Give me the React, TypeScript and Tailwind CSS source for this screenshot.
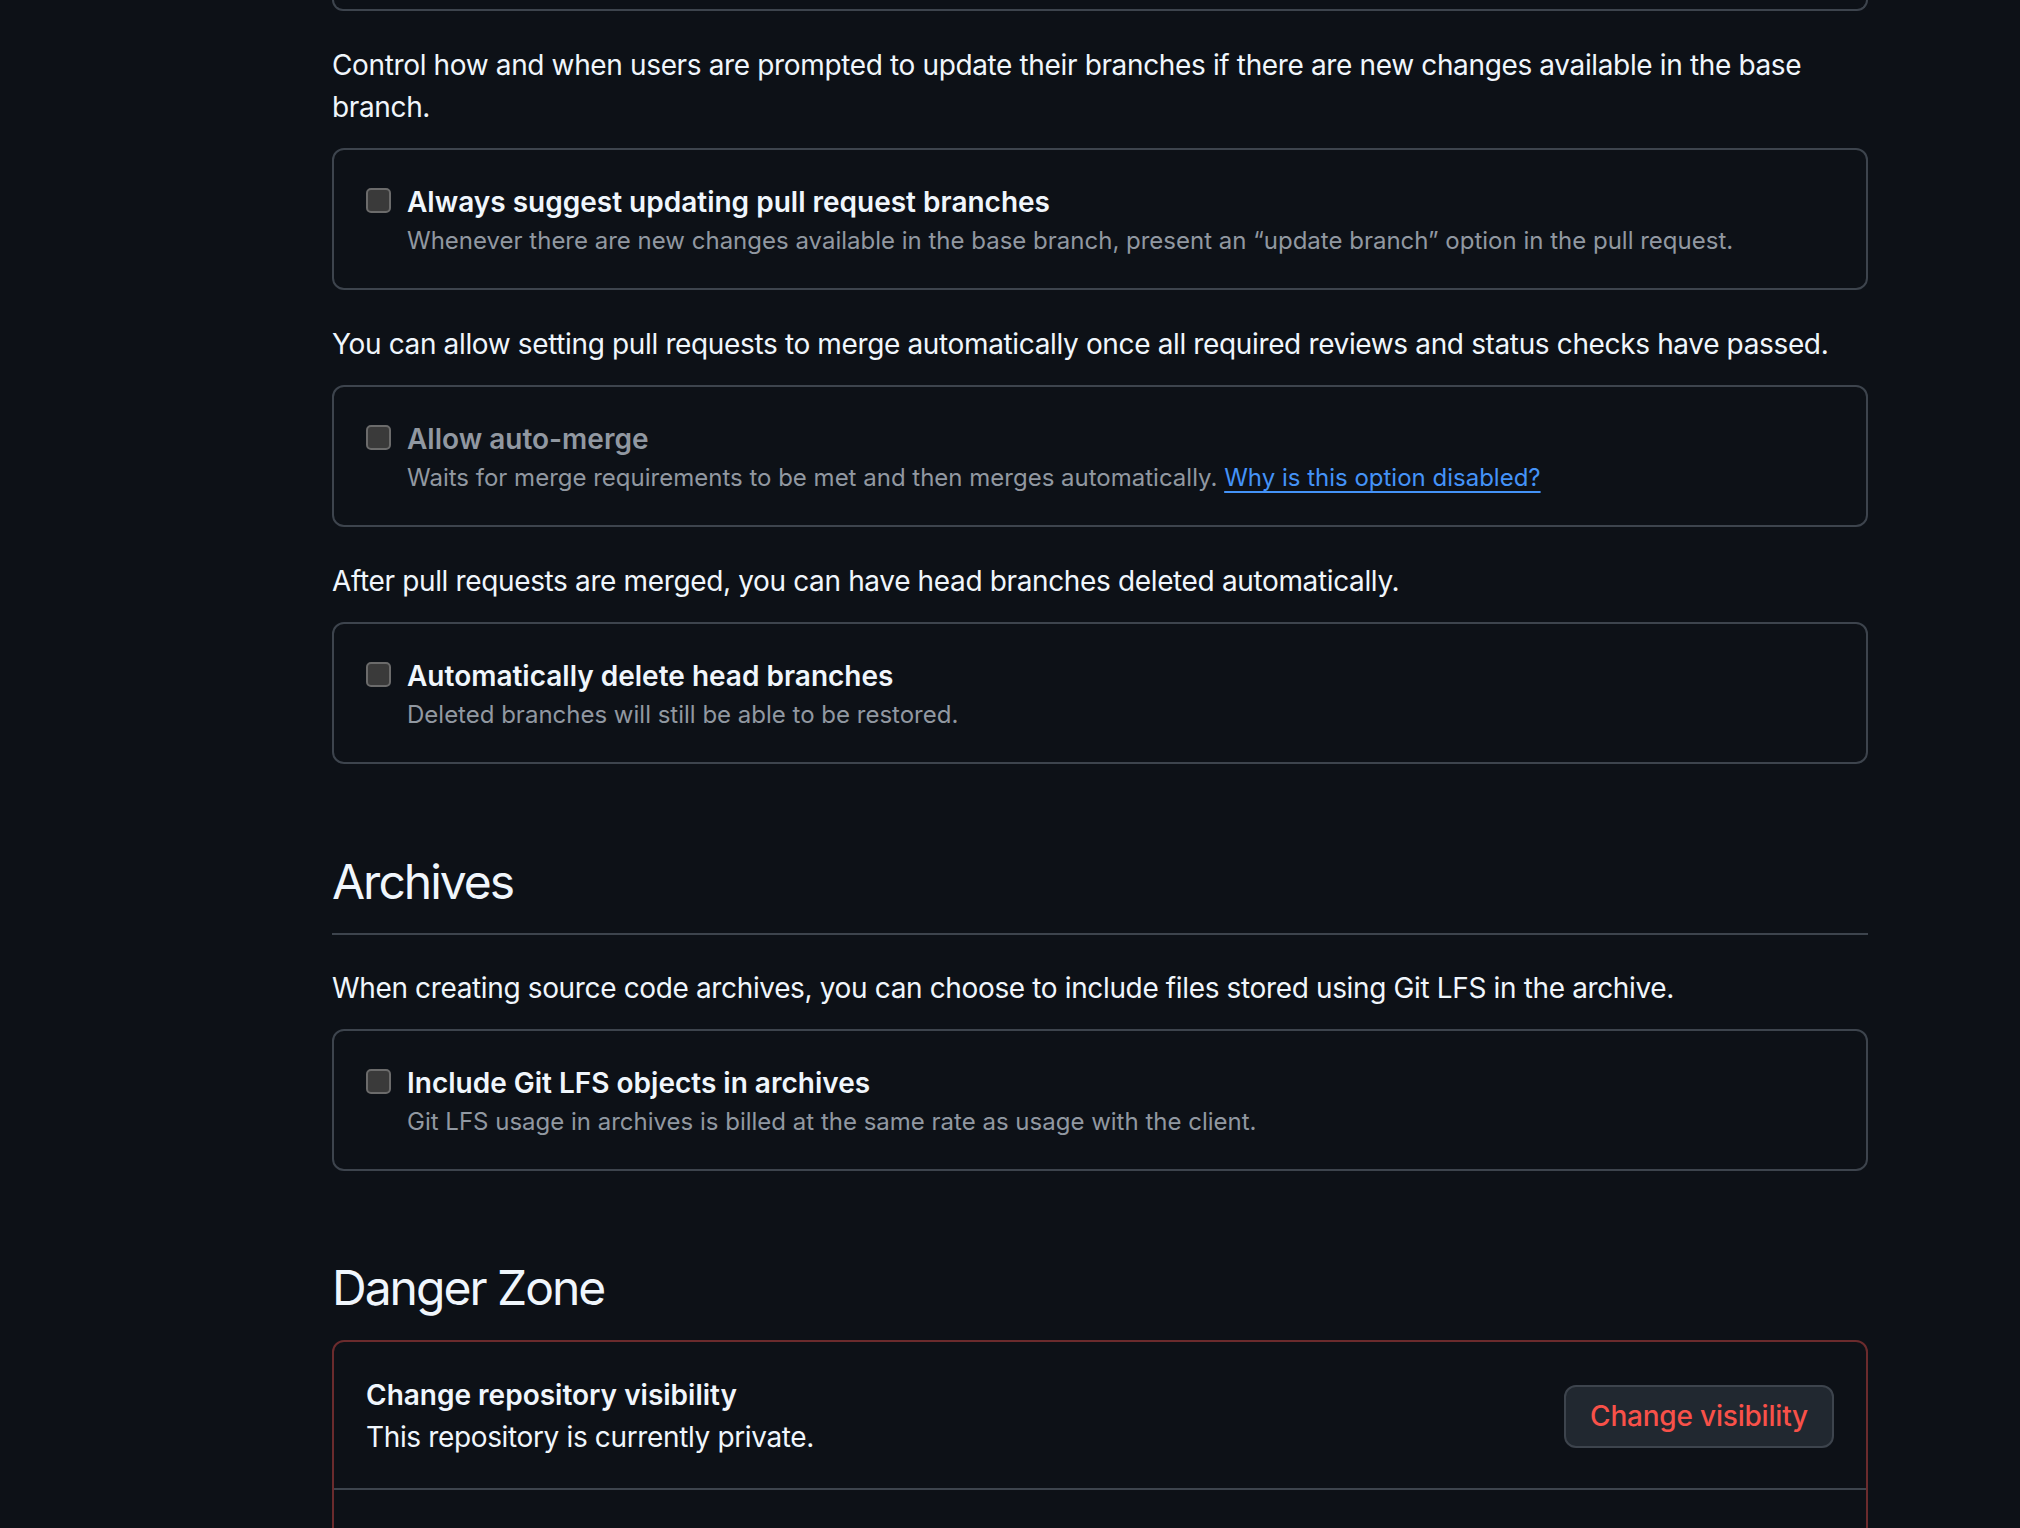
import { ReactNode } from "react";

const font = { fontFamily: "Inter, 'Noto Sans', 'Liberation Sans', sans-serif" };

type OptionProps = {
  title: string;
  children: ReactNode;
  disabled?: boolean;
};

const OptionBox = ({ title, children, disabled }: OptionProps) => (
  <div className="rounded-[12px] border-2 border-[#3d444d] px-[32px] pt-[32px] pb-[29px]">
    <div className="flex items-start">
      <span
        className="mt-[6px] h-[25px] w-[25px] shrink-0 rounded-[5px] border-2 border-[#6b6b6b] bg-[#3a3a3a]"
        aria-disabled={disabled}
      />
      <div className="ml-[16px]">
        <div
          className={
            disabled
              ? "text-[28px] font-semibold leading-[40px] text-[#9198a1]"
              : "text-[28px] font-semibold leading-[40px] text-[#f0f6fc]"
          }
        >
          {title}
        </div>
        <div className="mt-[1px] text-[24px] leading-[36px] text-[#9198a1]">{children}</div>
      </div>
    </div>
  </div>
);

const Para = ({ children, className = "" }: { children: ReactNode; className?: string }) => (
  <p className={`text-[28px] leading-[42px] tracking-[-0.36px] text-[#f0f6fc] ${className}`}>{children}</p>
);

type DangerRowProps = {
  title: string;
  desc: string;
  action: string;
  last?: boolean;
};

const DangerRow = ({ title, desc, action, last }: DangerRowProps) => (
  <div
    className={
      last
        ? "flex items-center justify-between px-[32px] pt-[32px] pb-[30px]"
        : "flex items-center justify-between border-b-2 border-[#3d444d] px-[32px] pt-[32px] pb-[30px]"
    }
  >
    <div>
      <div className="text-[28px] font-semibold leading-[42px] text-[#f0f6fc]">{title}</div>
      <div className="text-[28px] leading-[42px] tracking-[-0.36px] text-[#f0f6fc]">{desc}</div>
    </div>
    <button className="h-[63px] rounded-[12px] border-2 border-[#3d444d] bg-[#212830] px-[24px] text-[28px] font-medium tracking-[-0.2px] text-[#f85149]">
      {action}
    </button>
  </div>
);

export default function App() {
  return (
    <div className="min-h-screen w-full bg-[#0d1117]" style={font}>
      <div className="ml-[332px] w-[1536px]">
        <div className="h-[11px] rounded-b-[12px] border-x-2 border-b-2 border-[#3d444d]" />

        <Para className="mt-[33px]">
          Control how and when users are prompted to update their branches if there are new changes available in the
          base branch.
        </Para>
        <div className="mt-[20px]">
          <OptionBox title="Always suggest updating pull request branches">
            Whenever there are new changes available in the base branch, present an “update branch” option in the pull
            request.
          </OptionBox>
        </div>

        <Para className="mt-[33px]">
          You can allow setting pull requests to merge automatically once all required reviews and status checks have
          passed.
        </Para>
        <div className="mt-[20px]">
          <OptionBox title="Allow auto-merge" disabled>
            Waits for merge requirements to be met and then merges automatically.{" "}
            <a href="#" className="text-[#4493f8] underline decoration-2 underline-offset-[5px]">
              Why is this option disabled?
            </a>
          </OptionBox>
        </div>

        <Para className="mt-[33px]">After pull requests are merged, you can have head branches deleted automatically.</Para>
        <div className="mt-[20px]">
          <OptionBox title="Automatically delete head branches">Deleted branches will still be able to be restored.</OptionBox>
        </div>

        <h2 className="mt-[88px] border-b-2 border-[#3d444d] pb-[21px] text-[48px] font-normal leading-[60px] tracking-[-2px] text-[#f0f6fc]">
          Archives
        </h2>
        <Para className="mt-[32px]">
          When creating source code archives, you can choose to include files stored using Git LFS in the archive.
        </Para>
        <div className="mt-[20px]">
          <OptionBox title="Include Git LFS objects in archives">
            Git LFS usage in archives is billed at the same rate as usage with the client.
          </OptionBox>
        </div>

        <h2 className="mt-[87px] text-[48px] font-normal leading-[60px] tracking-[-2px] text-[#f0f6fc]">Danger Zone</h2>
        <div className="mt-[22px] mb-[80px] rounded-[12px] border-2 border-[#6b2b2d]">
          <DangerRow
            title="Change repository visibility"
            desc="This repository is currently private."
            action="Change visibility"
          />
          <DangerRow
            title="Disable branch protection rules"
            desc="Disable branch protection rules enforcement and APIs"
            action="Disable branch protection rules"
          />
          <DangerRow
            title="Transfer ownership"
            desc="Transfer this repository to another user or to an organization where you have the ability to create repositories."
            action="Transfer"
          />
          <DangerRow
            title="Archive this repository"
            desc="Mark this repository as archived and read-only."
            action="Archive this repository"
          />
          <DangerRow
            title="Delete this repository"
            desc="Once you delete a repository, there is no going back. Please be certain."
            action="Delete this repository"
            last
          />
        </div>
      </div>
    </div>
  );
}
